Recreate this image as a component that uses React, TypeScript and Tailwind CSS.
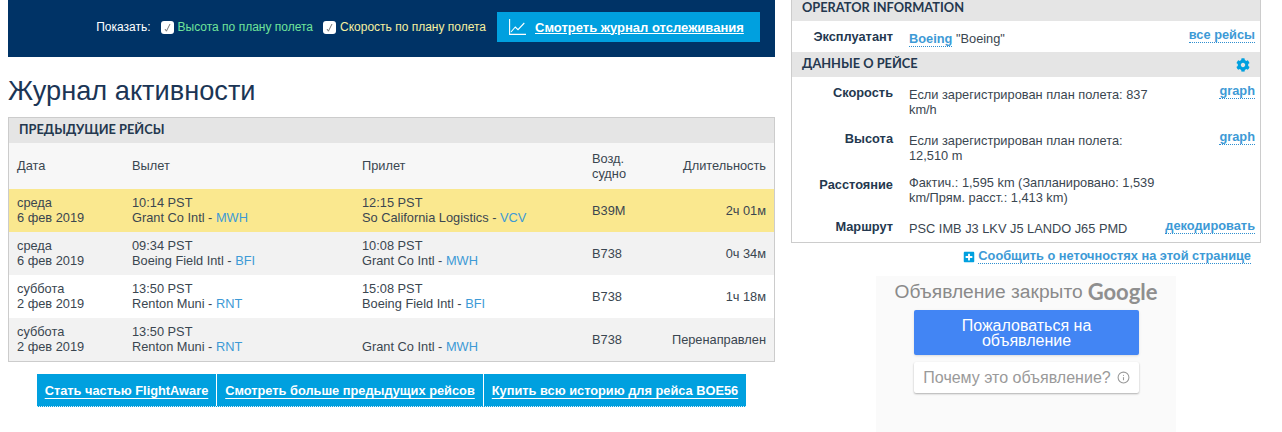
import { Info } from 'lucide-react';
import { FaCog, FaPlusSquare } from 'react-icons/fa';

const body = "font-['Liberation_Sans',Arial,sans-serif]";
const heading = "font-['Lato','Open_Sans',sans-serif]";

interface Flight {
  day: string;
  date: string;
  depTime: string;
  depName: string;
  depCode: string;
  arrTime: string;
  arrName: string;
  arrCode: string;
  plane: string;
  duration: string;
  bg: string;
}

const flights: Flight[] = [
  { day: 'среда', date: '6 фев 2019', depTime: '10:14 PST', depName: 'Grant Co Intl', depCode: 'MWH', arrTime: '12:15 PST', arrName: 'So California Logistics', arrCode: 'VCV', plane: 'B39M', duration: '2ч 01м', bg: 'bg-[#fae88f]' },
  { day: 'среда', date: '6 фев 2019', depTime: '09:34 PST', depName: 'Boeing Field Intl', depCode: 'BFI', arrTime: '10:08 PST', arrName: 'Grant Co Intl', arrCode: 'MWH', plane: 'B738', duration: '0ч 34м', bg: 'bg-[#f2f2f2]' },
  { day: 'суббота', date: '2 фев 2019', depTime: '13:50 PST', depName: 'Renton Muni', depCode: 'RNT', arrTime: '15:08 PST', arrName: 'Boeing Field Intl', arrCode: 'BFI', plane: 'B738', duration: '1ч 18м', bg: 'bg-white' },
  { day: 'суббота', date: '2 фев 2019', depTime: '13:50 PST', depName: 'Renton Muni', depCode: 'RNT', arrTime: '', arrName: 'Grant Co Intl', arrCode: 'MWH', plane: 'B738', duration: 'Перенаправлен', bg: 'bg-[#f2f2f2]' },
];

function Check() {
  return (
    <span className="flex h-[13px] w-[13px] items-center justify-center rounded-[3px] bg-white">
      <svg width="9" height="9" viewBox="0 0 9 9" fill="none" stroke="#666" strokeWidth="0.9">
        <path d="M2 6 L3.4 8.2 L7 1" />
      </svg>
    </span>
  );
}

function FlightRow({ f }: { f: Flight }) {
  return (
    <div className={`flex h-[43px] items-center px-[8px] text-[#3a4650] ${f.bg}`}>
      <div className="w-[115px] pb-[2px]">
        <div>{f.day}</div>
        <div>{f.date}</div>
      </div>
      <div className="w-[230px] pb-[2px]">
        <div>{f.depTime}</div>
        <div>
          {f.depName} - <span className="text-[#3d9ad6]">{f.depCode}</span>
        </div>
      </div>
      <div className="w-[230px] pb-[2px]">
        <div className="h-[15px]">{f.arrTime}</div>
        <div>
          {f.arrName} - <span className="text-[#3d9ad6]">{f.arrCode}</span>
        </div>
      </div>
      <div className="w-[60px]">{f.plane}</div>
      <div className="flex-1 text-right">{f.duration}</div>
    </div>
  );
}

function InfoRow({ label, link, children, h, labelTop = 'pt-[8px]', valueTop = 'pt-[10px]' }: { label: string; link?: string; children: React.ReactNode; h: string; labelTop?: string; valueTop?: string }) {
  return (
    <div className={`flex ${h}`}>
      <div className={`w-[101px] text-right font-bold text-[#24384f] ${labelTop}`}>{label}</div>
      <div className={`ml-[16px] w-[248px] leading-[15px] text-[#3a4650] ${valueTop}`}>{children}</div>
      <div className="flex-1 pr-[5px] pt-[6px] text-right">
        {link && <span className="border-b border-dotted border-[#2f8fd0] font-bold leading-[14px] text-[#3d9ad6]">{link}</span>}
      </div>
    </div>
  );
}

export default function App() {
  return (
    <div className={`flex h-[432px] w-[1282px] overflow-hidden bg-white text-[12.8px] leading-[15px] ${body}`}>
      <div className="ml-[8px] w-[767px]">
        <div className="flex h-[57px] items-start justify-end bg-[#003366] pr-[15px] pt-[12px]">
          <div className="flex h-[30px] items-center text-[12px] text-white">
            <span>Показать:</span>
            <span className="ml-[10px]"><Check /></span>
            <span className="ml-[4px] text-[#6fe39a]">Высота по плану полета</span>
            <span className="ml-[10px]"><Check /></span>
            <span className="ml-[4px] text-[#f5f0a0]">Скорость по плану полета</span>
          </div>
          <div className="ml-[11px] flex h-[30px] w-[263px] items-center bg-[#00a0df] pl-[12px] text-[13px] font-bold text-white">
            <svg width="17" height="16" viewBox="0 0 17 16" fill="none" stroke="white" strokeWidth="1.1">
              <path d="M0.6 0 V15.4 H17" />
              <path d="M2 13 L6.3 8 L9 10.6 L15.3 4" />
            </svg>
            <span className="ml-[9px] underline">Смотреть журнал отслеживания</span>
          </div>
        </div>

        <h1 className="mt-[18px] h-[42px] text-[27.2px] leading-[32px] text-[#1b3555]">Журнал активности</h1>

        <div className="border border-[#cccccc]">
          <div className={`flex h-[25px] items-center bg-[#e5e5e5] pb-[2px] pl-[10px] font-bold text-[#24384f] ${heading}`}>ПРЕДЫДУЩИЕ РЕЙСЫ</div>
          <div className="flex h-[46px] items-center bg-[#f7f7f7] px-[8px] text-[#3a4650]">
            <div className="w-[115px] pb-[2px]">Дата</div>
            <div className="w-[230px] pb-[2px]">Вылет</div>
            <div className="w-[230px] pb-[2px]">Прилет</div>
            <div className="w-[60px]">Возд.<br />судно</div>
            <div className="flex-1 pb-[2px] text-right">Длительность</div>
          </div>
          {flights.map((f, i) => (
            <FlightRow key={i} f={f} />
          ))}
        </div>

        <div className="ml-[29px] mt-[12px] flex h-[33px] w-[709px] items-center border-b border-dotted border-[#d8eef8] bg-[#00a0df] font-bold text-white">
          <div className="flex h-full w-[180px] items-center justify-center border-r border-white"><span className="underline underline-offset-[3px]">Стать частью FlightAware</span></div>
          <div className="flex h-full w-[267px] items-center justify-center border-r border-white"><span className="underline underline-offset-[3px]">Смотреть больше предыдущих рейсов</span></div>
          <div className="flex h-full flex-1 items-center justify-center"><span className="underline underline-offset-[3px]">Купить всю историю для рейса BOE56</span></div>
        </div>
      </div>

      <div className="ml-[16px] w-[470px]">
        <div className="h-[243px] border-x border-b border-[#cccccc]">
          <div className={`flex h-[21px] items-center bg-[#e5e5e5] pb-[7px] pl-[10px] font-bold text-[#24384f] ${heading}`}>OPERATOR INFORMATION</div>
          <InfoRow label="Эксплуатант" link="все рейсы" h="h-[31px]">
            <span className="border-b border-dotted border-[#2f8fd0] font-bold text-[#3d9ad6]">Boeing</span> "Boeing"
          </InfoRow>
          <div className={`flex h-[25px] items-center justify-between bg-[#e5e5e5] pb-[2px] pl-[10px] pr-[10px] font-bold text-[#24384f] ${heading}`}>
            <span>ДАННЫЕ О РЕЙСЕ</span>
            <FaCog size={14} className="mt-[3px] text-[#00a0df]" />
          </div>
          <InfoRow label="Скорость" link="graph" h="h-[46px]">Если зарегистрирован план полета: 837 km/h</InfoRow>
          <InfoRow label="Высота" link="graph" h="h-[46px]">Если зарегистрирован план полета: 12,510 m</InfoRow>
          <InfoRow label="Расстояние" h="h-[43px]" valueTop="pt-[6px]">Фактич.: 1,595 km (Запланировано: 1,539 km/Прям. расст.: 1,413 km)</InfoRow>
          <InfoRow label="Маршрут" link="декодировать" h="h-[30px]" labelTop="pt-[7px]" valueTop="pt-[9px]">PSC IMB J3 LKV J5 LANDO J65 PMD</InfoRow>
        </div>

        <div className="mt-[6px] flex items-center justify-end pr-[10px] font-bold text-[#3d9ad6]">
          <FaPlusSquare size={12} className="mr-[3px] text-[#00a0df]" />
          <span className="border-b border-dotted border-[#2f8fd0] leading-[14px]">Сообщить о неточностях на этой странице</span>
        </div>

        <div className="ml-[85px] mt-[12px] h-[156px] w-[300px] bg-[#fafafa]">
          <div className="flex h-[34px] items-center justify-center pb-[3px] text-[19.2px] text-[#8a8a8a]">
            Объявление закрыто
            <span className="ml-[5px] font-['Lato',sans-serif] text-[22px] font-bold text-[#8f8f8f]">Google</span>
          </div>
          <div className="ml-[38px] flex h-[45px] w-[225px] items-center justify-center rounded-[2px] bg-[#4285f4] text-center text-[16px] leading-[15px] text-white shadow-sm">
            Пожаловаться на<br />объявление
          </div>
          <div className="ml-[38px] mt-[7px] flex h-[31px] w-[225px] items-center justify-center rounded-[2px] bg-white text-[16px] text-[#9a9a9a] shadow-[0_1px_2px_rgba(0,0,0,0.3)]">
            Почему это объявление?
            <Info size={13} className="ml-[6px]" />
          </div>
        </div>
      </div>
    </div>
  );
}
